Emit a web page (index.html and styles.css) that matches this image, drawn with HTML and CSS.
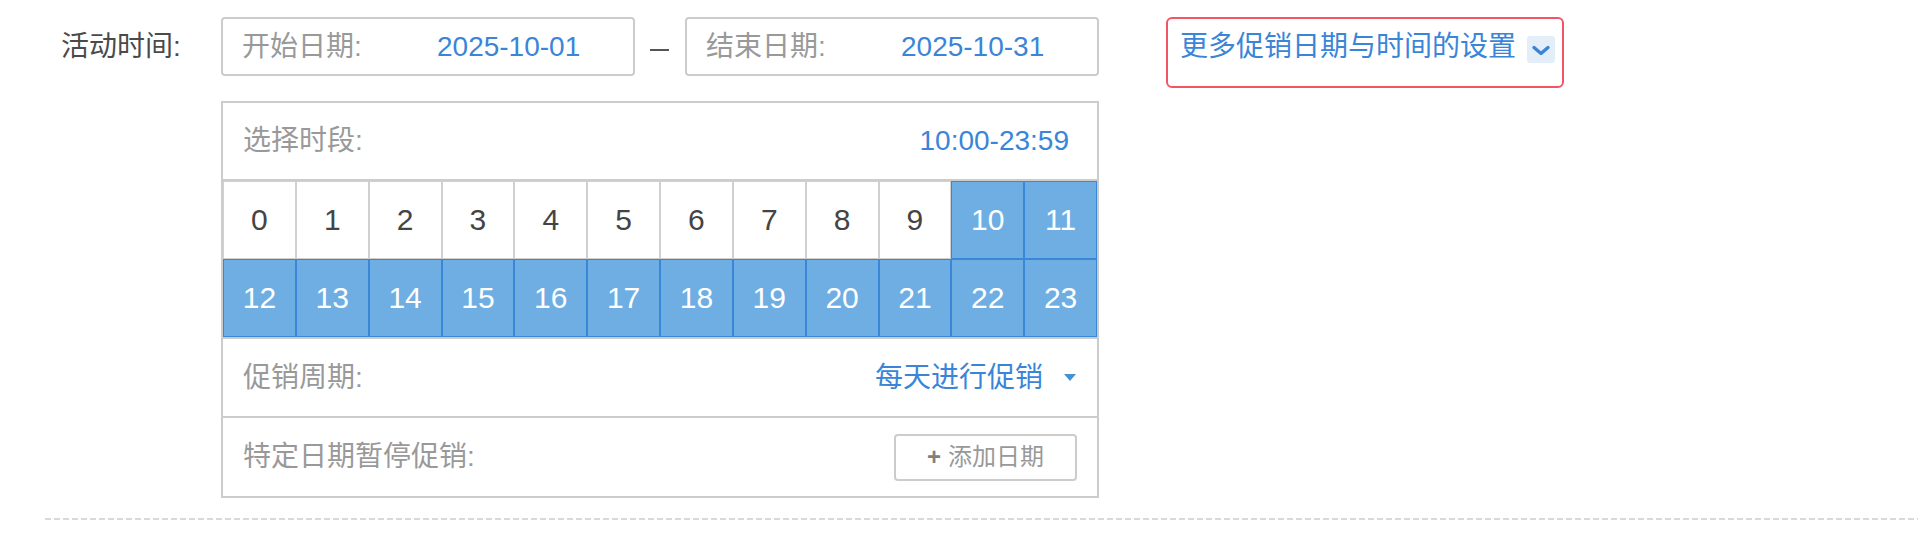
FILE: index.html
```html
<!DOCTYPE html>
<html lang="zh-CN">
<head>
<meta charset="utf-8">
<title>活动时间</title>
<link rel="stylesheet" href="styles.css">
</head>
<body>
<div class="page">
  <div class="form-row">
    <div class="form-label">活动时间:</div>
    <div class="form-body">
      <div class="date-row">
        <div class="date-box">
          <span class="date-label">开始日期:</span>
          <span class="date-value">2025-10-01</span>
        </div>
        <span class="date-dash"></span>
        <div class="date-box">
          <span class="date-label">结束日期:</span>
          <span class="date-value">2025-10-31</span>
        </div>
        <div class="more-box">
          <span class="more-text">更多促销日期与时间的设置</span>
          <span class="more-toggle">
            <svg width="28" height="27" viewBox="0 0 28 27"><polyline points="7,11.5 14,17.5 21,11.5" fill="none" stroke="#3a85d8" stroke-width="3.4" stroke-linecap="round" stroke-linejoin="round"/></svg>
          </span>
        </div>
      </div>
      <div class="panel">
        <div class="panel-row panel-head">
          <span class="row-label">选择时段:</span>
          <span class="row-value">10:00-23:59</span>
        </div>
        <div class="hour-grid">
          <div class="hour">0</div>
          <div class="hour">1</div>
          <div class="hour">2</div>
          <div class="hour">3</div>
          <div class="hour">4</div>
          <div class="hour">5</div>
          <div class="hour">6</div>
          <div class="hour">7</div>
          <div class="hour">8</div>
          <div class="hour">9</div>
          <div class="hour on">10</div>
          <div class="hour on">11</div>
          <div class="hour on">12</div>
          <div class="hour on">13</div>
          <div class="hour on">14</div>
          <div class="hour on">15</div>
          <div class="hour on">16</div>
          <div class="hour on">17</div>
          <div class="hour on">18</div>
          <div class="hour on">19</div>
          <div class="hour on">20</div>
          <div class="hour on">21</div>
          <div class="hour on">22</div>
          <div class="hour on">23</div>
        </div>
        <div class="panel-row cycle-row">
          <span class="row-label">促销周期:</span>
          <span class="cycle-select">
            <span class="row-value">每天进行促销</span>
            <span class="caret"></span>
          </span>
        </div>
        <div class="panel-row pause-row">
          <span class="row-label">特定日期暂停促销:</span>
          <span class="add-btn"><span class="add-plus">+</span><span class="add-text">添加日期</span></span>
        </div>
      </div>
    </div>
  </div>
  <div class="divider"></div>
</div>
</body>
</html>
```

FILE: styles.css
```css
html, body {
  margin: 0;
  background: #fff;
}
body {
  font-family: "Liberation Sans", "Noto Sans CJK SC", sans-serif;
}
.page {
  padding-top: 17px;
}
.form-row {
  display: flex;
  align-items: flex-start;
  padding-left: 61px;
}
.form-label {
  width: 160px;
  height: 59px;
  line-height: 59px;
  font-size: 28px;
  color: #4a4a4a;
}
.form-body {
  display: flex;
  flex-direction: column;
}
.date-row {
  display: flex;
  align-items: flex-start;
}
.date-box {
  box-sizing: border-box;
  width: 414px;
  height: 59px;
  border: 2px solid #cccccc;
  border-radius: 4px;
  padding-left: 19px;
  display: flex;
  align-items: center;
}
.date-label {
  width: 195px;
  font-size: 28px;
  line-height: 32px;
  color: #999999;
}
.date-value {
  font-size: 28px;
  line-height: 32px;
  color: #3a85d8;
}
.date-dash {
  width: 19px;
  height: 2px;
  background: #555555;
  margin: 32px 16px 0 15px;
}
.more-box {
  box-sizing: border-box;
  margin-left: 67px;
  width: 398px;
  height: 71px;
  border: 2px solid #f25565;
  border-radius: 6px;
  padding: 8px 8px 0 12px;
  display: flex;
  align-items: flex-start;
}
.more-text {
  font-size: 28px;
  line-height: 40px;
  color: #3a85d8;
  white-space: nowrap;
}
.more-toggle {
  margin-left: 11px;
  margin-top: 9px;
  width: 28px;
  height: 27px;
  background: #e4eef9;
  border-radius: 3px;
  display: flex;
}
.panel {
  box-sizing: border-box;
  margin-top: 13px;
  width: 878px;
  border: 2px solid #cccccc;
}
.panel-row {
  box-sizing: border-box;
  display: flex;
  align-items: center;
  justify-content: space-between;
  padding: 0 20px;
}
.panel-head {
  height: 78px;
  border-bottom: 2px solid #cccccc;
  padding-right: 28px;
}
.row-label {
  font-size: 28px;
  line-height: 32px;
  color: #999999;
}
.row-value {
  font-size: 28px;
  line-height: 32px;
  color: #3a85d8;
}
.hour-grid {
  display: grid;
  grid-template-columns: repeat(12, 1fr);
  grid-auto-rows: 78px;
  border-bottom: 2px solid #cccccc;
}
.hour {
  display: flex;
  align-items: center;
  justify-content: center;
  font-size: 30px;
  color: #444444;
  box-shadow: inset 0 0 0 1px #d0d0d0;
}
.hour.on {
  background: #6eaee3;
  color: #ffffff;
  box-shadow: inset 0 0 0 1px #3a86d8;
}
.cycle-row {
  height: 79px;
  border-bottom: 2px solid #cccccc;
  padding-right: 21px;
}
.cycle-select {
  display: flex;
  align-items: center;
  gap: 21px;
}
.caret {
  width: 0;
  height: 0;
  border-left: 6.5px solid transparent;
  border-right: 6.5px solid transparent;
  border-top: 7px solid #4592d0;
}
.pause-row {
  height: 78px;
}
.add-btn {
  box-sizing: border-box;
  width: 183px;
  height: 47px;
  border: 2px solid #cccccc;
  border-radius: 4px;
  display: flex;
  align-items: center;
  justify-content: center;
  gap: 7px;
}
.add-plus {
  font-size: 24px;
  font-weight: bold;
  line-height: 30px;
  color: #808080;
}
.add-text {
  font-size: 24px;
  line-height: 30px;
  color: #999999;
}
.divider {
  margin: 20px 0 0 45px;
  height: 2px;
  background: repeating-linear-gradient(90deg, #d9d9d9 0 6px, transparent 6px 9px);
}
```
